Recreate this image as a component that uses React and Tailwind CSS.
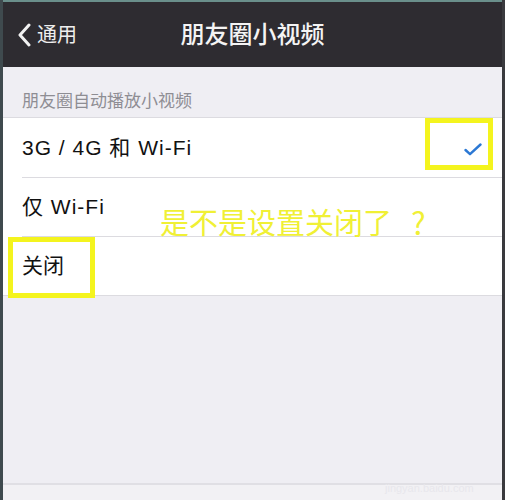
import React from "react";

export default function App() {
  const font = { fontFamily: '"Liberation Sans", "Noto Sans CJK SC", sans-serif' };
  return (
    <div className="relative w-[505px] h-[500px] overflow-hidden flex bg-[#efeef3]" style={font}>
      <div className="w-[3px] h-full bg-[#3f4a4e]" />
      <div className="flex-1 flex flex-col">
        <div className="h-[2px] bg-[#6a8f8b]" />
        <div className="h-[65px] bg-[#2e2c31] grid grid-cols-[1fr_auto_1fr] items-center">
          <div className="flex items-center pl-[14px] gap-[5px] text-white">
            <svg width="15" height="24" viewBox="0 0 15 24" fill="none">
              <path d="M12 2 L3 12 L12 22" stroke="#f2f2f2" strokeWidth="3" strokeLinecap="round" strokeLinejoin="round" />
            </svg>
            <span className="text-[20px] leading-none text-[#eeeeee]">通用</span>
          </div>
          <div className="text-[24px] leading-none text-[#f4f4f4] font-medium">朋友圈小视频</div>
          <div />
        </div>
        <div className="h-[50px] flex items-end pl-[19px] pb-[7px] text-[17px] leading-none text-[#8e8d93]">
          朋友圈自动播放小视频
        </div>
        <div className="bg-white border-t border-b border-[#dcdbe0] text-[21px] text-[#111111]">
          <div className="h-[59px] flex items-center pl-[19px] pr-[20px] justify-between">
            <span className="tracking-[1px]">3G / 4G 和 Wi-Fi</span>
            <svg width="18" height="13" viewBox="0 0 18 13" fill="none" className="mt-[4px]">
              <path d="M1.5 7 L6 11.2 L16.5 1.5" stroke="#2b78d4" strokeWidth="2.4" strokeLinecap="round" strokeLinejoin="round" />
            </svg>
          </div>
          <div className="ml-[19px] border-t border-[#dcdbe0]" />
          <div className="h-[58px] flex items-center pl-[19px] tracking-[1px]">仅 Wi-Fi</div>
          <div className="ml-[19px] border-t border-[#dcdbe0]" />
          <div className="h-[58px] flex items-center pl-[19px]">关闭</div>
        </div>
        <div className="flex-1" />
        <div className="h-[17px] border-t-2 border-[#e0dfe4] bg-[#f2f1f4]" />
      </div>
      <div className="w-[3px] h-full bg-[#3a3a3e]" />

      <div className="absolute left-[425px] top-[118px] w-[68px] h-[52px] border-[5px] border-[#f4f41e]" />
      <div className="absolute left-[8px] top-[237px] w-[87px] h-[61px] border-[5px] border-[#f4f41e]" />
      <div
        className="absolute left-[160px] top-[206px] text-[29px] leading-none text-[#f0f035] whitespace-nowrap flex items-center"
        style={{ fontFamily: '"Noto Sans CJK SC", sans-serif' }}
      >
        <span>是不是设置关闭了</span>
        <span className="ml-[19px] text-[31px]">?</span>
      </div>
      <div className="absolute left-[385px] top-[483px] text-[11px] text-[#e8e7ec] leading-none">jingyan.baidu.com</div>
    </div>
  );
}
